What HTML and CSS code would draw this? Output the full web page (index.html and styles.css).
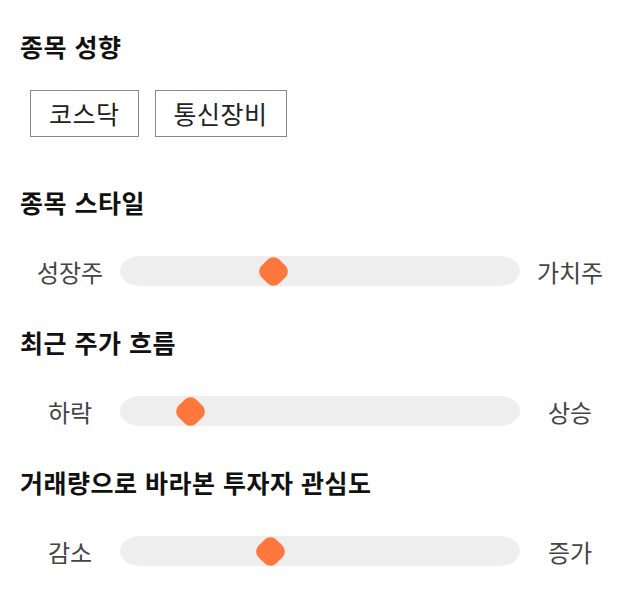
FILE: index.html
```html
<!DOCTYPE html>
<html lang="ko">
<head>
<meta charset="utf-8">
<link rel="stylesheet" href="styles.css">
</head>
<body>
<div class="panel">
  <div class="section section-tags">
    <h2 class="heading">종목 성향</h2>
    <div class="tags">
      <span class="tag">코스닥</span>
      <span class="tag">통신장비</span>
    </div>
  </div>

  <div class="section">
    <h2 class="heading">종목 스타일</h2>
    <div class="scale">
      <span class="scale-label">성장주</span>
      <div class="track"><span class="thumb" style="left:153px"></span></div>
      <span class="scale-label">가치주</span>
    </div>
  </div>

  <div class="section">
    <h2 class="heading">최근 주가 흐름</h2>
    <div class="scale">
      <span class="scale-label">하락</span>
      <div class="track"><span class="thumb" style="left:70px"></span></div>
      <span class="scale-label">상승</span>
    </div>
  </div>

  <div class="section">
    <h2 class="heading">거래량으로 바라본 투자자 관심도</h2>
    <div class="scale">
      <span class="scale-label">감소</span>
      <div class="track"><span class="thumb" style="left:150px"></span></div>
      <span class="scale-label">증가</span>
    </div>
  </div>
</div>
</body>
</html>
```

FILE: styles.css
```css
body {
	margin: 0;
	background: #fff;
	font-family: "Noto Sans CJK KR", "Noto Sans", sans-serif;
	color: #111;
}
.panel {
	padding: 31px 20px 0;
}
.section + .section {
	margin-top: 41px;
}
.heading {
	margin: 0 0 39px;
	height: 30px;
	line-height: 30px;
	font-size: 25px;
	font-weight: 700;
	letter-spacing: 0.5px;
	color: #111;
}
.section-tags .heading {
	margin-bottom: 29px;
}
.tags {
	display: flex;
	gap: 16px;
	padding: 0 0 9px 10px;
}
.tag {
	display: inline-block;
	height: 45px;
	line-height: 45px;
	padding: 0 18px;
	border: 1px solid #888;
	font-size: 25px;
	letter-spacing: 0.5px;
	color: #222;
}
.scale {
	display: flex;
	align-items: center;
	height: 30px;
}
.scale-label {
	width: 100px;
	text-align: center;
	font-size: 24px;
	color: #444;
}
.track {
	flex: 1;
	position: relative;
	height: 30px;
	background: #eee;
	border-radius: 20px / 15px;
}
.thumb {
	position: absolute;
	top: 2.5px;
	width: 25px;
	height: 25px;
	margin-left: -12.5px;
	background: #ff773d;
	border-radius: 8px;
	transform: rotate(45deg);
}
```
